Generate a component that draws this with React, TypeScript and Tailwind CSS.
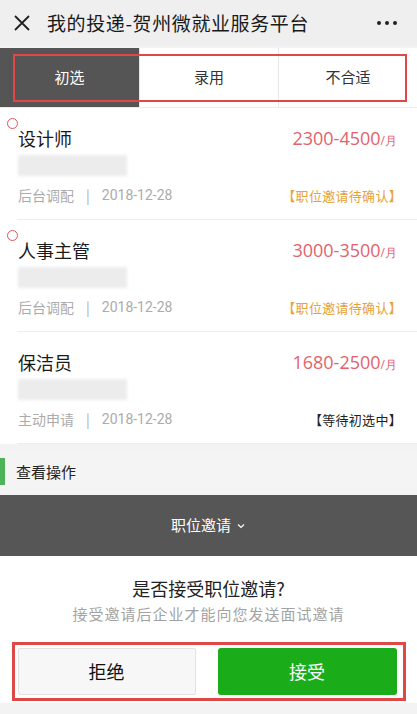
import { useState } from "react";

interface Delivery {
  title: string;
  salary: string;
  source: string;
  date: string;
  status: string;
  invited: boolean;
}

const deliveries: Delivery[] = [
  { title: "设计师", salary: "2300-4500", source: "后台调配", date: "2018-12-28", status: "【职位邀请待确认】", invited: true },
  { title: "人事主管", salary: "3000-3500", source: "后台调配", date: "2018-12-28", status: "【职位邀请待确认】", invited: true },
  { title: "保洁员", salary: "1680-2500", source: "主动申请", date: "2018-12-28", status: "【等待初选中】", invited: false },
];

const tabs = ["初选", "录用", "不合适"];

function App() {
  const [tab, setTab] = useState(0);

  return (
    <div className="w-[417px] h-[714px] overflow-hidden bg-[#f3f3f3] font-['Noto_Sans_CJK_SC','Noto_Sans',sans-serif]">
      {/* header */}
      <div className="h-[46px] bg-[#efefef] flex items-center pl-[13px] pr-[20px]">
        <svg width="18" height="18" viewBox="0 0 18 18" className="shrink-0">
          <path d="M2 2 L16 16 M16 2 L2 16" stroke="#222" strokeWidth="1.8" />
        </svg>
        <span className="ml-[16px] text-[19px] text-[#1a1a1a] tracking-[0.6px]">我的投递-贺州微就业服务平台</span>
        <div className="ml-auto flex gap-[4px]">
          <span className="w-[4px] h-[4px] rounded-full bg-[#222]"></span>
          <span className="w-[4px] h-[4px] rounded-full bg-[#222]"></span>
          <span className="w-[4px] h-[4px] rounded-full bg-[#222]"></span>
        </div>
      </div>

      {/* tabs */}
      <div className="relative mt-[2px] h-[60px] grid grid-cols-3 bg-white border-b border-[#ececec]">
        {tabs.map((t, i) => (
          <button
            key={t}
            onClick={() => setTab(i)}
            className={`flex items-center justify-center text-[15px] ${i > 0 ? "border-l border-[#e6e6e6]" : ""} ${
              tab === i ? "bg-[#555555] text-white" : "bg-white text-[#333]"
            }`}
          >
            {t}
          </button>
        ))}
        <div className="absolute left-[13px] right-[10px] top-[6px] bottom-[5px] border-2 border-[#e04848] pointer-events-none"></div>
      </div>

      {/* list */}
      <div className="bg-white">
        {deliveries.map((d, i) => (
          <div key={i} className="relative pl-[18px] h-[112px]">
            {d.invited && (
              <span className="absolute left-[7px] top-[10px] w-[11px] h-[11px] rounded-full border-[1.5px] border-[#d85a64]"></span>
            )}
            <div className="pr-[20px] pt-[17px] flex items-center justify-between h-[44px]">
              <span className="text-[18px] text-[#1a1a1a]">{d.title}</span>
              <span className="text-[18px] text-[#e2636c] font-['Open_Sans',sans-serif]">
                {d.salary}
                <span className="text-[12px]">/月</span>
              </span>
            </div>
            <div className="mt-[3px] h-[21px] w-[109px] bg-[#ececec] blur-[1.5px]"></div>
            <div className="pr-[20px] mt-[9px] flex items-center text-[14px] text-[#ababab]">
              <span>{d.source}</span>
              <span className="mx-[12px]">|</span>
              <span className="font-['Roboto',sans-serif]">{d.date}</span>
              <span className={`ml-auto -mr-[5px] text-[13px] tracking-[0.3px] ${d.invited ? "text-[#e9a136]" : "text-[#222]"}`}>{d.status}</span>
            </div>
            <div className="absolute left-[17px] right-0 bottom-0 border-b border-[#ededed]"></div>
          </div>
        ))}
      </div>

      {/* operations */}
      <div className="mt-[6px] h-[45px] bg-[#f4f4f4] flex items-center relative">
        <span className="absolute left-0 top-[8px] w-[5px] h-[27px] bg-[#4cb35a]"></span>
        <span className="ml-[16px] text-[15px] text-[#222]">查看操作</span>
      </div>

      <div className="h-[61px] bg-[#565656] flex items-center justify-center text-white text-[15px]">
        职位邀请
        <svg width="10" height="10" viewBox="0 0 10 10" className="ml-[5px]">
          <path d="M2 3.5 L5 6.5 L8 3.5" stroke="#fff" strokeWidth="1.2" fill="none" />
        </svg>
      </div>

      {/* confirm */}
      <div className="bg-white h-[147px] flex flex-col items-center">
        <div className="mt-[19px] text-[18px] text-[#222]">是否接受职位邀请?</div>
        <div className="mt-[1px] text-[15px] text-[#a3a3a3] tracking-[1px]">接受邀请后企业才能向您发送面试邀请</div>
        <div className="relative mt-[16px] w-[394px] h-[59px] border-[3px] border-[#e04848] px-[3px] py-[3px] flex gap-[22px]">
          <button className="w-[178px] h-[47px] bg-[#f7f7f7] border border-[#e2e2e2] rounded-[2px] text-[18px] text-[#111]">拒绝</button>
          <button className="w-[179px] h-[47px] bg-[#1aad19] rounded-[3px] text-[18px] text-white">接受</button>
        </div>
      </div>
    </div>
  );
}

export default App;
